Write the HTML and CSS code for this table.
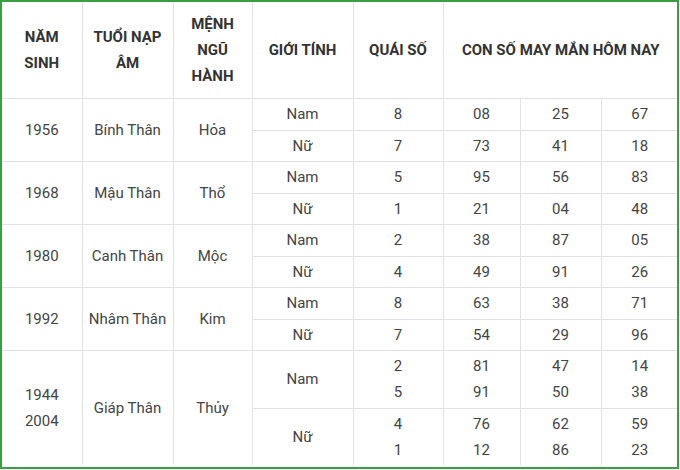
FILE: index.html
```html
<!DOCTYPE html>
<html lang="vi">
<head>
<meta charset="utf-8">
<link rel="stylesheet" href="styles.css">
</head>
<body>
<div class="frame">
<table class="lucky">
  <colgroup>
    <col class="c1"><col class="c2"><col class="c3"><col class="c4"><col class="c5"><col class="c6"><col class="c7"><col class="c8">
  </colgroup>
  <thead>
    <tr class="head">
      <th>NĂM SINH</th>
      <th>TUỔI NẠP ÂM</th>
      <th>MỆNH NGŨ HÀNH</th>
      <th>GIỚI TÍNH</th>
      <th>QUÁI SỐ</th>
      <th colspan="3">CON SỐ MAY MẮN HÔM NAY</th>
    </tr>
  </thead>
  <tbody>
    <tr class="r32"><td rowspan="2">1956</td><td rowspan="2">Bính Thân</td><td rowspan="2">Hỏa</td><td>Nam</td><td>8</td><td>08</td><td>25</td><td>67</td></tr>
    <tr class="r31"><td>Nữ</td><td>7</td><td>73</td><td>41</td><td>18</td></tr>
    <tr class="r32"><td rowspan="2">1968</td><td rowspan="2">Mậu Thân</td><td rowspan="2">Thổ</td><td>Nam</td><td>5</td><td>95</td><td>56</td><td>83</td></tr>
    <tr class="r31"><td>Nữ</td><td>1</td><td>21</td><td>04</td><td>48</td></tr>
    <tr class="r32"><td rowspan="2">1980</td><td rowspan="2">Canh Thân</td><td rowspan="2">Mộc</td><td>Nam</td><td>2</td><td>38</td><td>87</td><td>05</td></tr>
    <tr class="r31"><td>Nữ</td><td>4</td><td>49</td><td>91</td><td>26</td></tr>
    <tr class="r32"><td rowspan="2">1992</td><td rowspan="2">Nhâm Thân</td><td rowspan="2">Kim</td><td>Nam</td><td>8</td><td>63</td><td>38</td><td>71</td></tr>
    <tr class="r31"><td>Nữ</td><td>7</td><td>54</td><td>29</td><td>96</td></tr>
    <tr class="r58"><td rowspan="2" class="two">1944<br>2004</td><td rowspan="2">Giáp Thân</td><td rowspan="2">Thủy</td><td>Nam</td><td class="two">2<br>5</td><td class="two">81<br>91</td><td class="two">47<br>50</td><td class="two">14<br>38</td></tr>
    <tr class="r57"><td>Nữ</td><td class="two">4<br>1</td><td class="two">76<br>12</td><td class="two">62<br>86</td><td class="two">59<br>23</td></tr>
  </tbody>
</table>
</div>
</body>
</html>
```

FILE: styles.css
```css
html, body {
  margin: 0;
  padding: 0;
  background: #ffffff;
}

.frame {
  width: 675px;
  height: 465px;
  border: 2px solid #3c9e43;
  background: #ffffff;
  overflow: hidden;
}

.lucky {
  width: 676px;
  border-collapse: collapse;
  border-style: hidden;
  table-layout: fixed;
  font-family: Roboto, "Liberation Sans", Arial, sans-serif;
  font-size: 15px;
  color: #444444;
}

.c1 { width: 80px; }
.c2 { width: 91px; }
.c3 { width: 79px; }
.c4 { width: 101px; }
.c5 { width: 90px; }
.c6 { width: 77px; }
.c7 { width: 81px; }
.c8 { width: 77px; }

.lucky th,
.lucky td {
  border: 1px solid #e2e2e6;
  text-align: center;
  vertical-align: middle;
  padding: 0 2px;
  line-height: 26px;
  white-space: nowrap;
}

.lucky th {
  font-weight: 700;
  color: #333333;
  padding: 0 10px;
  white-space: normal;
}

.head { height: 96px; }
.r32 { height: 32px; }
.r31 { height: 31px; }
.r58 { height: 58px; }
.r57 { height: 57px; }
```
